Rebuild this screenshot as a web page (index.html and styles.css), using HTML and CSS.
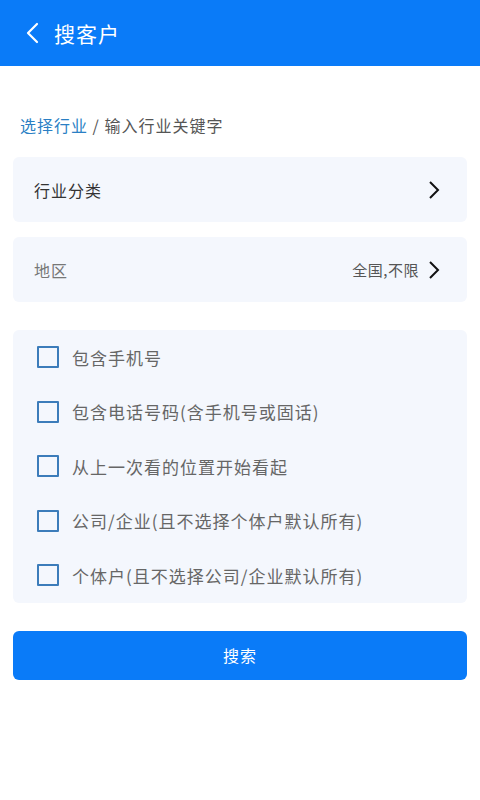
FILE: index.html
```html
<!DOCTYPE html>
<html>
  <head>
    <meta charset="utf-8">
    <title>搜客户</title>
    <link rel="stylesheet" href="styles.css">
  </head>
  <body>
    <div class="header">
      <svg class="back" width="16" height="22" viewBox="0 0 16 22"><path d="M12 2 L3 11 L12 20" fill="none" stroke="#fff" stroke-width="2.2" stroke-linecap="round" stroke-linejoin="round"/></svg>
      <div class="title">搜客户</div>
    </div>
    <div class="content">
      <div class="crumb"><span class="crumb-on">选择行业</span> / 输入行业关键字</div>

      <div class="row">
        <div class="row-label">行业分类</div>
        <svg class="arrow" width="12" height="20" viewBox="0 0 12 20"><path d="M2 2 L10 10 L2 18" fill="none" stroke="#111" stroke-width="2"/></svg>
      </div>
      <div class="row">
        <div class="row-label light">地区</div>
        <div class="row-value">全国,不限</div>
        <svg class="arrow" width="12" height="20" viewBox="0 0 12 20"><path d="M2 2 L10 10 L2 18" fill="none" stroke="#111" stroke-width="2"/></svg>
      </div>

      <div class="options">
        <div class="option"><span class="box"></span>包含手机号</div>
        <div class="option"><span class="box"></span>包含电话号码(含手机号或固话)</div>
        <div class="option"><span class="box"></span>从上一次看的位置开始看起</div>
        <div class="option"><span class="box"></span>公司/企业(且不选择个体户默认所有)</div>
        <div class="option"><span class="box"></span>个体户(且不选择公司/企业默认所有)</div>
      </div>

      <div class="btn">搜索</div>
    </div>
  </body>
</html>
```

FILE: styles.css
```css
body {
  margin: 0;
  background: #fff;
  font-family: "Noto Sans CJK SC", "Noto Sans", sans-serif;
}

.header {
  height: 66px;
  background: #0a7bf8;
  display: flex;
  align-items: center;
  padding-left: 25px;
}
.back {
  margin-right: 13px;
}
.title {
  color: #fff;
  font-size: 21px;
  letter-spacing: 1px;
}

.content {
  padding: 0 13px;
}

.crumb {
  margin: 46px 0 0 7px;
  height: 26px;
  font-size: 16px;
  letter-spacing: 1px;
  color: #555;
  line-height: 26px;
}
.crumb-on {
  color: #2a7fc4;
}

.row {
  margin-top: 19px;
  height: 65px;
  background: #f4f7fd;
  border-radius: 6px;
  display: flex;
  align-items: center;
  padding: 0 27px 0 21px;
}
.row + .row {
  margin-top: 15px;
}
.row-label {
  flex: 1;
  font-size: 16px;
  letter-spacing: 1px;
  color: #333;
}
.row-label.light {
  color: #777;
}
.row-value {
  font-size: 15px;
  letter-spacing: 0.5px;
  color: #555;
  margin-right: 9px;
}

.options {
  margin-top: 28px;
  background: #f4f7fd;
  border-radius: 6px;
  padding: 0 0 0 24px;
}
.option {
  height: 54.5px;
  display: flex;
  align-items: center;
  font-size: 17px;
  letter-spacing: 1px;
  color: #666;
}
.box {
  width: 18px;
  height: 18px;
  border: 2px solid #3c7cba;
  border-radius: 1px;
  margin-right: 13px;
}

.btn {
  margin-top: 28px;
  height: 49px;
  background: #0a7bf8;
  border-radius: 6px;
  color: #fff;
  font-size: 16px;
  letter-spacing: 1px;
  display: flex;
  align-items: center;
  justify-content: center;
}
```
